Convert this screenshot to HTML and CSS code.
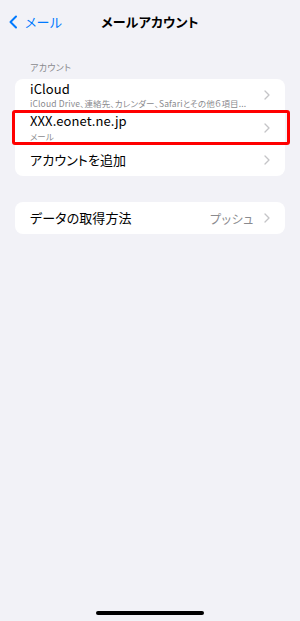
FILE: index.html
```html
<!DOCTYPE html>
<html lang="ja">
<head>
<meta charset="utf-8">
<link rel="stylesheet" href="styles.css">
</head>
<body>
<div class="screen">
  <header class="nav">
    <div class="back">
      <svg class="back-chev" width="10" height="14" viewBox="0 0 10 14"><path d="M8 1.5 L2.5 7 L8 12.5" fill="none" stroke="#007aff" stroke-width="2" stroke-linecap="round" stroke-linejoin="round"/></svg>
      <span class="back-label">メール</span>
    </div>
    <div class="title">メールアカウント</div>
  </header>

  <div class="section-label">アカウント</div>
  <div class="card">
    <div class="row row-1">
      <div class="row-text">
        <div class="row-title">iCloud</div>
        <div class="row-sub">iCloud Drive、連絡先、カレンダー、Safariとその他６項目...</div>
      </div>
      <svg class="chev" width="6" height="10" viewBox="0 0 6 10"><path d="M1 1 L5 5 L1 9" fill="none" stroke="#c4c4c7" stroke-width="1.3" stroke-linecap="round" stroke-linejoin="round"/></svg>
    </div>
    <div class="row row-2">
      <div class="row-text">
        <div class="row-title">XXX.eonet.ne.jp</div>
        <div class="row-sub">メール</div>
      </div>
      <svg class="chev" width="6" height="10" viewBox="0 0 6 10"><path d="M1 1 L5 5 L1 9" fill="none" stroke="#c4c4c7" stroke-width="1.3" stroke-linecap="round" stroke-linejoin="round"/></svg>
      <div class="highlight"></div>
    </div>
    <div class="row row-3">
      <div class="row-text">
        <div class="row-title">アカウントを追加</div>
      </div>
      <svg class="chev" width="6" height="10" viewBox="0 0 6 10"><path d="M1 1 L5 5 L1 9" fill="none" stroke="#c4c4c7" stroke-width="1.3" stroke-linecap="round" stroke-linejoin="round"/></svg>
    </div>
  </div>

  <div class="card card-2">
    <div class="row row-single">
      <div class="row-text">
        <div class="row-title">データの取得方法</div>
      </div>
      <span class="row-value">プッシュ</span>
      <svg class="chev" width="6" height="10" viewBox="0 0 6 10"><path d="M1 1 L5 5 L1 9" fill="none" stroke="#c4c4c7" stroke-width="1.3" stroke-linecap="round" stroke-linejoin="round"/></svg>
    </div>
  </div>

  <div class="spacer"></div>
  <div class="home-bar"></div>
</div>
</body>
</html>
```

FILE: styles.css
```css
* { box-sizing: border-box; }
html, body {
  margin: 0;
  padding: 0;
  background: #f2f2f7;
}
body {
  font-family: "Noto Sans CJK JP", "Noto Sans", "Liberation Sans", sans-serif;
  font-feature-settings: "palt";
  color: #000;
}
.screen {
  width: 300px;
  height: 621px;
  display: flex;
  flex-direction: column;
  overflow: hidden;
}
.nav {
  position: relative;
  height: 44px;
  display: flex;
  align-items: center;
  justify-content: center;
}
.back {
  position: absolute;
  left: 8px;
  top: 15px;
  display: flex;
  align-items: center;
  gap: 7px;
  color: #007aff;
}
.back-chev { display: block; }
.back-label {
  font-size: 13px;
  line-height: 14px;
  letter-spacing: 0.3px;
}
.title {
  font-size: 13px;
  font-weight: 700;
  letter-spacing: 0.2px;
  line-height: 14px;
}
.section-label {
  margin: 18px 0 0 30px;
  font-size: 9px;
  line-height: 11px;
  color: #8a8a8e;
  letter-spacing: 0.3px;
}
.card {
  margin: 6px 15px 0;
  background: #fff;
  border-radius: 8px;
}
.card-2 { margin-top: 26px; }
.row {
  position: relative;
  display: flex;
  align-items: center;
  padding: 0 15px 0 15px;
}
.row-1 { height: 32px; }
.row-2 { height: 33px; }
.row-3 { height: 32px; }
.row-single { height: 32px; }
.row-text {
  flex: 1;
  min-width: 0;
}
.row-title {
  font-size: 13px;
  line-height: 14px;
  letter-spacing: 0.1px;
}
.row-sub {
  font-size: 8.5px;
  line-height: 10px;
  color: #8a8a8e;
  white-space: nowrap;
  overflow: hidden;
  padding-top: 2.5px;
}
.row-1 .row-sub { letter-spacing: 0.15px; }
.row-value {
  font-size: 12px;
  color: #8a8a8e;
  letter-spacing: 0.6px;
  margin-right: 10px;
}
.chev {
  display: block;
  flex: none;
}
.highlight {
  position: absolute;
  left: -3px;
  right: -5px;
  top: -1px;
  bottom: -1px;
  border: 3px solid #ff0000;
  border-radius: 3px;
  pointer-events: none;
}
.spacer { flex: 1; }
.home-bar {
  width: 108px;
  height: 4px;
  border-radius: 2px;
  background: #000;
  margin: 0 auto 6px;
}
```
